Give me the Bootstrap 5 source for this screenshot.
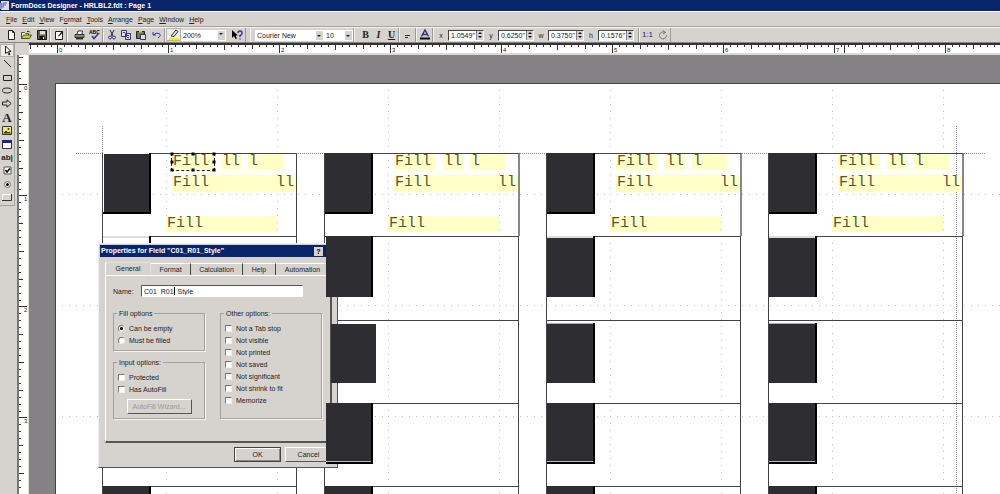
<!DOCTYPE html>
<html lang="en">
<head>
<meta charset="utf-8">
<meta name="viewport" content="width=device-width, initial-scale=1">
<title>FormDocs Designer - HRLBL2.fdt : Page 1</title>
<link href="https://cdn.jsdelivr.net/npm/bootstrap@5.3.0/dist/css/bootstrap.min.css" rel="stylesheet">
<style>
:root { --face:#d6d3ce; --navy:#08246b; --gray:#848284; --ink:#2e2e32; }
body { font:7px/9px "Liberation Sans", Arial, sans-serif; color:#222; background:var(--face); height:100vh; overflow:hidden; }
button, input, select { font:inherit; color:inherit; border-radius:0; }
svg { display:block; }
.titlebar { height:11px; background:var(--navy); color:#fff; font-weight:700; line-height:11px; gap:2px; }
.titlebar h1 { font:inherit; margin:0; }
.menubar { height:16px; padding:0 6px; gap:5px; border-bottom:1px solid #a5a29c; border-top:1px solid #fff; }
.menubar a { color:#222; text-decoration:none; }
.tools { height:16px; border-top:1px solid #f4f2ee; border-bottom:1px solid var(--gray); }
.tools .set { border-right:1px solid #9c9a94; border-left:1px solid #f4f2ee; height:14px; }
.tb { width:15px; height:13px; padding:0; border:0; background:none; display:flex; align-items:center; justify-content:center; }
.tb.on { background:#efedea; outline:1px solid #b5b2ac; outline-offset:-1px; }
.tb.slim { width:13px; }
.pick { appearance:none; border:0; height:11px; padding:0 10px 0 2px; line-height:11px;
  background:#fff linear-gradient(var(--face),var(--face)) right 1px center/7px 9px no-repeat; }
.pickwrap::after { content:""; position:absolute; right:3px; top:5px; border:2px solid transparent; border-top-color:#222; border-bottom:0; }
.num { height:11px; border:1px solid #444; border-right-color:#fff; border-bottom-color:#fff; background:#fff; width:36px; }
.num input { border:0; padding:0 0 0 2px; width:27px; min-width:0; height:9px; line-height:9px; background:none; }
.num div { width:7px; background:var(--face); border-left:1px solid var(--gray); }
.num button { border:0; padding:0; height:4px; width:6px; display:flex; align-items:center; justify-content:center; background:none; }
.num .up::after, .num .dn::after { content:""; border:2px solid transparent; }
.num .up::after { border-bottom-color:#111; border-top:0; }
.num .dn::after { border-top-color:#111; border-bottom:0; }
.axis { width:14px; text-align:center; margin:0; }
.work { display:grid; grid-template-columns:17px 12px 1fr; grid-template-rows:12px 1fr; }
.toolbox { grid-row:1/3; }
.toolbox .stack { height:163px; padding:1px 0; border-right:1px solid #a5a29c; border-bottom:1px solid #a5a29c; width:15px; }
.toolbox .tb { width:14px; }
.hrule { background:#fff; border-top:2px solid #333; border-bottom:2px solid #dddad6; }
.vrule { background:#fff; border-left:2px solid #777; border-right:1px solid #dddad6; }
.marks { font-size:6px; line-height:7px; }
.hrule .marks span { flex:0 0 111px; padding:2px 0 0 2px; }
.vrule .marks span { flex:0 0 111px; padding:0 0 0 5px; }
.hrule .marks { padding-left:28px; }
.vrule .marks { padding-top:30px; }
.canvas { background:var(--gray); padding:28px 0 0 26px; }
.paper { background:#fff; border-top:1px solid #444; border-left:1px solid #444; height:100%; padding:69px 0 0 46px; }
.labels { display:grid; grid-template-columns:repeat(4,195px); grid-template-rows:83px 84px 83px 83px 83px; column-gap:27px; position:relative; }
.tag { border:1px solid #444; border-bottom:0; }
.tag.first.wide { margin-right:-1px; border-right:2px solid #888; }
.photo { width:48px; height:61px; background:var(--ink); border-right:2px solid #000; margin-top:-1px; flex:none; z-index:3; }
.r0 .photo { border-bottom:2px solid #000; }
.first:not(.wide) .photo { box-shadow:inset 1px 1px #fff; }
.r1 .photo { box-shadow:inset 0 2px #ddd; }
.r2 .photo { margin-top:2px; height:60px; box-shadow:inset 0 1px #aaa; }
.r3 .photo { border-bottom:2px solid #000; box-shadow:inset 0 -1px #bbb; }
.c0 .photo { z-index:1; }
.c0.r1 .photo { background:#fff; }
.c1.r1 .photo { box-shadow:none; margin-left:1px; width:47px; }
.c1.r3 .photo { margin-left:1px; width:47px; }
.photo.moved { margin-left:6px; margin-top:3px; width:45px; height:59px; border-right:0; box-shadow:none; }
.fields { font:15px/16px "Liberation Mono", "Courier New", monospace; color:#54543a; padding-left:15px; width:145px; }
.fld { background:#ffffc6; white-space:pre; height:16px; padding-left:1px; }
.line1 { padding-left:6px; gap:7px; height:21px; }
.line2 { margin-left:6px; height:17px; padding-right:2px; display:flex; justify-content:space-between; }
.line3 { margin-top:24px; width:111px; }
.picked { outline:1px dashed #222; outline-offset:0; }
.knob { position:absolute; width:3px; height:3px; background:#000; transform:translate(-50%,-50%); }
.dlg { left:98px; top:243px; width:240px; background:var(--face); z-index:2; padding:1px; border:1px solid #eee; border-right:1px solid #555; border-bottom:1px solid #555; margin:0; }
.dlg header { background:var(--navy); color:#fff; font-weight:700; height:12px; line-height:12px; padding:0 13px 0 1px; }
.dlg header h2 { font:inherit; margin:0; }
.dlg header button { width:9px; height:9px; border:0; padding:0; background:var(--face); color:#000; line-height:9px; font-weight:700; }
.dlg .nav-tabs { margin:5px 5px 0; border:0; height:13px; flex-wrap:nowrap; }
.dlg .nav-link { border:0; border-top:1px solid #fff; border-right:1px solid #444; border-radius:0; padding:0; color:#222; height:12px; line-height:11px; margin:1px 0 0; background:none; }
.dlg .nav-link.active { height:13px; margin:0; border-left:1px solid #fff; line-height:12px; color:#222; background:var(--face); }
.pane { margin:0 4px 0 5px; height:168px; border:1px solid #fff; border-right:2px solid #555; border-bottom:2px solid #555; padding:9px 8px 0 7px; }
.pane label { line-height:9px; }
.namerow { margin-bottom:12px; }
.namebox { width:162px; height:12px; border:1px solid #fff; border-top:1px solid #555; border-left:1px solid #555; background:#fff; padding:0 2px; }
.caret { left:33px; top:2px; width:1px; height:8px; background:#000; }
.box { border:1px solid #a5a29c; box-shadow:1px 1px #f4f2ee; padding:0 4px 4px; margin:0; position:relative; }
.box.tall { padding-bottom:12px; width:102px; }
.box legend { font:inherit; float:none; width:auto; margin:0 0 0 -1px; padding:0 2px; line-height:9px; position:static; }
.opt { height:12px; gap:4px; display:flex; align-items:center; }
.opt input { appearance:none; margin:0; width:7px; height:7px; background:#fff; border:1px solid #777; border-right-color:#eee; border-bottom-color:#eee; flex:none; }
.opt input[type=radio] { border-radius:50%; }
.opt input[type=radio]:checked { background:radial-gradient(circle,#000 1px,#fff 2px); }
.push { background:var(--face); border:1px solid #fff; border-right-color:#555; border-bottom-color:#555; padding:0; height:15px; line-height:12px; width:47px; }
.push.main { border-color:#444; box-shadow:inset 1px 1px #fff, inset -1px -1px #888; }
.push:disabled { color:#9a9892; width:65px; }
</style>
</head>
<body class="d-flex flex-column">
<header class="titlebar d-flex align-items-center">
  <svg width="9" height="9" viewBox="0 0 9 9" class="flex-shrink-0"><rect x="1" width="8" height="9" fill="#dde"/><path d="M3 7V2h4M3 4h3" stroke="#46b" fill="none"/><path d="M0 2h2v6H0z" fill="#88c"/></svg>
  <h1>FormDocs Designer - HRLBL2.fdt : Page 1</h1>
</header>
<nav class="menubar d-flex align-items-center flex-shrink-0">
  <a href="#"><u>F</u>ile</a><a href="#"><u>E</u>dit</a><a href="#"><u>V</u>iew</a><a href="#">F<u>o</u>rmat</a><a href="#"><u>T</u>ools</a><a href="#"><u>A</u>rrange</a><a href="#"><u>P</u>age</a><a href="#"><u>W</u>indow</a><a href="#"><u>H</u>elp</a>
</nav>
<div class="tools d-flex align-items-center flex-shrink-0">
  <div class="set d-flex align-items-center ps-1 border-start-0">
    <button class="tb" aria-label="New"><svg width="9" height="10" viewBox="0 0 9 10"><path d="M1.5.5h4l2 2v7h-6zM5.5.5v2h2" fill="#fff" stroke="#222"/></svg></button>
    <button class="tb" aria-label="Open"><svg width="11" height="10" viewBox="0 0 11 10"><path d="M.5 8.500V2.500h3l1 1h3v2" fill="#ffe" stroke="#552"/><path d="M.5 8.500l2-3.500h8l-2 3.500z" fill="#cc3" stroke="#552"/><path d="M6 1.500q2-1 3 1" stroke="#222" fill="none"/></svg></button>
    <button class="tb" aria-label="Save"><svg width="10" height="10" viewBox="0 0 10 10"><path d="M.5.5h9v9h-9z" fill="#663" stroke="#111"/><path d="M3 1h5v3.500H3z" fill="#dde"/><path d="M2.500 6h5v3.500h-5z" fill="#111"/><path d="M6 7h1v2H6z" fill="#eee"/></svg></button>
  </div>
  <div class="set d-flex"><button class="tb" aria-label="Edit form"><svg width="10" height="10" viewBox="0 0 10 10"><path d="M1.500 1.500h7v8h-7z" fill="#fff" stroke="#222"/><path d="M4 6l4-5 1.500 1L5 6.500z" fill="#222"/></svg></button></div>
  <div class="set d-flex ps-1"><button class="tb" aria-label="Print"><svg width="11" height="10" viewBox="0 0 11 10"><path d="M3 4l1-3h4.500L8 4" fill="#fff" stroke="#333"/><path d="M1 4.500h9v3H1z" fill="#888" stroke="#333"/><path d="M2 8.500h7" stroke="#333" stroke-width="2"/></svg></button>
    <button class="tb" aria-label="Spelling"><svg width="11" height="10" viewBox="0 0 11 10"><text x="0" y="4" font-size="5" font-weight="700">ABC</text><path d="M3 6l2 2.500L9.500 3.500" stroke="#33a" stroke-width="1.500" fill="none"/></svg></button></div>
  <div class="set d-flex"><button class="tb" aria-label="Cut"><svg width="10" height="10" viewBox="0 0 10 10"><path d="M3 0l3 6M7 0L4 6" stroke="#223" fill="none"/><circle cx="3" cy="7.500" r="1.500" fill="none" stroke="#33a"/><circle cx="7" cy="7.500" r="1.500" fill="none" stroke="#33a"/></svg></button>
    <button class="tb" aria-label="Copy"><svg width="11" height="10" viewBox="0 0 11 10"><path d="M.5.500h5v6h-5zM4.500 3.500h5v6h-5z" fill="#dde" stroke="#337"/><path d="M6 5.500h2M6 7.500h2M2 2.500h2" stroke="#337"/></svg></button>
    <button class="tb" aria-label="Paste"><svg width="11" height="10" viewBox="0 0 11 10"><path d="M.5 1.500h8v7h-8z" fill="#774" stroke="#222"/><path d="M3 .5h3v2H3z" fill="#cc6"/><path d="M4.500 4.500h5v5h-5z" fill="#dde" stroke="#337"/></svg></button>
    <button class="tb" aria-label="Undo"><svg width="10" height="10" viewBox="0 0 10 10"><path d="M1 2v3h3M1.500 5Q4 2 7 3.500T6 8" stroke="#33a" fill="none"/></svg></button></div>
  <div class="set d-flex"><button class="tb on" aria-label="Highlight"><svg width="10" height="11" viewBox="0 0 10 11"><path d="M0 9h10v2H0z" fill="#ee0"/><path d="M2 7l5-6 2 1.500L5 7.500z" fill="#ddd" stroke="#333"/></svg></button>
    <div class="pickwrap position-relative d-flex align-items-center"><select class="pick" style="width:45px" aria-label="Zoom"><option>200%</option></select></div>
    <button class="tb ms-1" aria-label="Context help"><svg width="11" height="10" viewBox="0 0 11 10"><path d="M0 0v8l2-2 1.500 3L5 8.500 3.500 5.500H6z"/><path d="M6 3q0-2 2-2t2 2-2 2.500V7M8 8.500v1" stroke="#33a" stroke-width="1.500" fill="none"/></svg></button></div>
  <div class="set d-flex align-items-center ps-1 ms-1"><div class="pickwrap position-relative"><select class="pick d-block" style="width:69px" aria-label="Font"><option>Courier New</option></select></div>
    <div class="pickwrap position-relative"><select class="pick d-block" style="width:29px" aria-label="Size"><option>10</option></select></div></div>
  <div class="set d-flex ps-1" style="font-family:'Liberation Serif',serif;font-size:10px"><button class="tb slim fw-bold">B</button><button class="tb slim fw-bold fst-italic">I</button><button class="tb slim fw-bold text-decoration-underline">U</button></div>
  <div class="set d-flex"><button class="tb" aria-label="Line"><svg width="8" height="8" viewBox="0 0 8 8"><path d="M1 4.500h5M1 6.500h3" stroke="#333"/></svg></button></div>
  <div class="set d-flex"><button class="tb" aria-label="Text colour"><svg width="10" height="11" viewBox="0 0 10 11"><path d="M1.500 7.500L5 1l3.500 6.500M3 5.500h4" stroke="#337" stroke-width="1.500" fill="none"/><path d="M0 8.500h10v2H0z"/></svg></button></div>
  <div class="set d-flex align-items-center">
    <label class="axis" for="px">x</label><div class="num d-flex"><input id="px" value='1.0549"'><div><button class="up" aria-label="More"></button><button class="dn" aria-label="Less"></button></div></div>
    <label class="axis" for="py">y</label><div class="num d-flex"><input id="py" value='0.6250"'><div><button class="up" aria-label="More"></button><button class="dn" aria-label="Less"></button></div></div>
    <label class="axis" for="pw">w</label><div class="num d-flex"><input id="pw" value='0.3750"'><div><button class="up" aria-label="More"></button><button class="dn" aria-label="Less"></button></div></div>
    <label class="axis" for="ph">h</label><div class="num d-flex me-1"><input id="ph" value='0.1576"'><div><button class="up" aria-label="More"></button><button class="dn" aria-label="Less"></button></div></div>
  </div>
  <div class="set d-flex"><button class="tb" style="color:#228;font-size:8px">1:1</button><button class="tb" aria-label="Rotate"><svg width="10" height="10" viewBox="0 0 10 10"><path d="M7 2.500A3.500 3.500 0 1 0 8.500 5M5 .5l2.500 2L5 4" stroke="#777" fill="none"/></svg></button></div>
</div>
<main class="work flex-grow-1 overflow-hidden">
  <aside class="toolbox"><div class="stack d-flex flex-column justify-content-between">
    <button class="tb on" aria-label="Select"><svg width="9" height="11" viewBox="0 0 9 11"><path d="M2.500 1v7.500l2-1.500 1.500 3 1-.5-1.500-3H8z" fill="#fff" stroke="#222"/></svg></button>
    <button class="tb" aria-label="Line"><svg width="9" height="9" viewBox="0 0 9 9"><path d="M1 1l7 7" stroke="#222"/></svg></button>
    <button class="tb" aria-label="Rectangle"><svg width="9" height="9" viewBox="0 0 9 9"><path d="M.5 2.500h8v5h-8z" fill="none" stroke="#222"/></svg></button>
    <button class="tb" aria-label="Ellipse"><svg width="10" height="9" viewBox="0 0 10 9"><ellipse cx="5" cy="4.500" rx="4.500" ry="2.500" fill="none" stroke="#222"/></svg></button>
    <button class="tb" aria-label="Arrow"><svg width="10" height="9" viewBox="0 0 10 9"><path d="M.5 3h4.500V.8L9.200 4.500 5 8.200V6H.5z" fill="none" stroke="#222"/></svg></button>
    <button class="tb" style="font:bold 13px/13px 'Liberation Serif',serif">A</button>
    <button class="tb" aria-label="Picture"><svg width="10" height="9" viewBox="0 0 10 9"><path d="M.5.500h9v8h-9z" fill="#ee6" stroke="#333"/><path d="M1 7.500l3-3 2 2 1.500-1L9 7.500z" fill="#333"/><circle cx="6.500" cy="3" r="1" fill="#333"/></svg></button>
    <button class="tb" aria-label="Table"><svg width="10" height="9" viewBox="0 0 10 9"><path d="M.5.500h9v8h-9z" fill="#fff" stroke="#333"/><path d="M0 0h10v3H0z" fill="#228"/></svg></button>
    <button class="tb fw-bold" style="font-size:8px">ab|</button>
    <button class="tb" aria-label="Check box"><svg width="9" height="9" viewBox="0 0 9 9"><path d="M1 1h7v7H1z" fill="#fff" stroke="#555"/><path d="M2.500 4l1.500 2L7 2.500" stroke="#000" stroke-width="1.500" fill="none"/></svg></button>
    <button class="tb" aria-label="Radio"><svg width="9" height="9" viewBox="0 0 9 9"><circle cx="4.500" cy="4.500" r="3" fill="#fff" stroke="#666"/><circle cx="4.500" cy="4.500" r="1.500"/></svg></button>
    <button class="tb" aria-label="Button"><svg width="10" height="7" viewBox="0 0 10 7"><path d="M.5 6V.5H9" stroke="#fff" fill="none"/><path d="M0 6.500h9.500V0" stroke="#333" fill="none"/></svg></button>
  </div></aside>
  <div></div>
  <div class="hrule position-relative overflow-hidden">
    <svg class="position-absolute w-100 h-100 top-0 start-0"><defs><pattern id="ht" x="28" width="111" height="12" patternUnits="userSpaceOnUse"><path d="M.5 0v8M56.500 0v5M28.500 0v4M84.500 0v4M7.500 0v2M14.500 0v2M21.500 0v2M35.500 0v2M42.500 0v2M49.500 0v2M63.500 0v2M70.500 0v2M77.500 0v2M91.500 0v2M98.500 0v2M105.500 0v2" stroke="#333"/></pattern></defs><rect width="100%" height="100%" fill="url(#ht)"/><path d="M815.500 0v8" stroke="#333"/></svg>
    <div class="marks d-flex"><span>0</span><span>1</span><span>2</span><span>3</span><span>4</span><span>5</span><span>6</span><span>7</span><span>8</span></div>
  </div>
  <div class="vrule position-relative overflow-hidden">
    <svg class="position-absolute w-100 h-100 top-0 start-0"><defs><pattern id="vt" y="29" width="12" height="111" patternUnits="userSpaceOnUse"><path d="M0 .5h8M0 56.500h5M0 28.500h4M0 84.500h4M0 7.500h2M0 14.500h2M0 21.500h2M0 35.500h2M0 42.500h2M0 49.500h2M0 63.500h2M0 70.500h2M0 77.500h2M0 91.500h2M0 98.500h2M0 105.500h2" stroke="#333"/></pattern></defs><rect width="100%" height="100%" fill="url(#vt)"/></svg>
    <div class="marks d-flex flex-column"><span>0</span><span>1</span><span>2</span><span>3</span></div>
  </div>
  <div class="canvas overflow-hidden">
    <div class="paper position-relative">
      <svg class="position-absolute w-100 h-100 top-0 start-0"><defs><pattern id="dots" x="110" y="110" width="111" height="111" patternUnits="userSpaceOnUse"><path d="M.5 0v111M0 .5h111" stroke="#bbb" stroke-dasharray="1 6"/></pattern></defs><rect width="100%" height="100%" fill="url(#dots)"/>
        <path d="M46.500 42v28M900.500 42v600M20 69.500h910" stroke="#888" stroke-dasharray="1 1"/></svg>
      <div class="labels" id="labels"></div>
    </div>
  </div>
</main>
<form class="dlg position-absolute" onsubmit="return false">
  <header class="d-flex justify-content-between align-items-center"><h2>Properties for Field "C01_R01_Style"</h2><button type="button">?</button></header>
  <div class="nav nav-tabs" role="tablist">
    <button type="button" class="nav-link active" style="width:46px">General</button><button type="button" class="nav-link" style="width:40px">Format</button><button type="button" class="nav-link" style="width:52px">Calculation</button><button type="button" class="nav-link" style="width:33px">Help</button><button type="button" class="nav-link" style="width:54px">Automation</button>
  </div>
  <div class="pane">
    <div class="namerow d-flex align-items-center"><label for="fname" style="width:28px">Name:</label><div class="position-relative d-flex"><input id="fname" class="namebox" value="C01_R01_Style"><span class="caret position-absolute"></span></div></div>
    <div class="d-flex justify-content-between">
      <div class="d-flex flex-column justify-content-between" style="width:92px">
        <fieldset class="box"><legend>Fill options</legend>
          <div class="pt-1"><div class="opt"><input type="radio" name="fill" id="f1" checked><label for="f1">Can be empty</label></div>
          <div class="opt"><input type="radio" name="fill" id="f2"><label for="f2">Must be filled</label></div></div></fieldset>
        <fieldset class="box"><legend>Input options:</legend>
          <div class="pt-1"><div class="opt"><input type="checkbox" id="i1"><label for="i1">Protected</label></div>
          <div class="opt"><input type="checkbox" id="i2"><label for="i2">Has AutoFill</label></div></div>
          <button type="button" class="push d-block mx-auto mt-1" disabled>AutoFill Wizard...</button></fieldset>
      </div>
      <fieldset class="box tall"><legend>Other options:</legend>
        <div class="pt-1">
        <div class="opt"><input type="checkbox" id="o1"><label for="o1">Not a Tab stop</label></div>
        <div class="opt"><input type="checkbox" id="o2"><label for="o2">Not visible</label></div>
        <div class="opt"><input type="checkbox" id="o3"><label for="o3">Not printed</label></div>
        <div class="opt"><input type="checkbox" id="o4"><label for="o4">Not saved</label></div>
        <div class="opt"><input type="checkbox" id="o5"><label for="o5">Not significant</label></div>
        <div class="opt"><input type="checkbox" id="o6"><label for="o6">Not shrink to fit</label></div>
        <div class="opt"><input type="checkbox" id="o7"><label for="o7">Memorize</label></div></div></fieldset>
    </div>
  </div>
  <div class="d-flex justify-content-end gap-1 pt-1 pb-1 pe-1"><button type="button" class="push main">OK</button><button type="button" class="push">Cancel</button></div>
</form>
<script src="https://cdn.jsdelivr.net/npm/bootstrap@5.3.0/dist/js/bootstrap.bundle.min.js"></script>
<script>
// Label sheet: four columns, five rows; only the top row carries fields.
const knobs = [[0,0],[50,0],[100,0],[0,50],[100,50],[0,100],[50,100],[100,100]]
  .map(([x, y]) => `<i class="knob" style="left:${x}%;top:${y}%"></i>`).join('');
let html = '';
for (let r = 0; r < 5; r++) for (let c = 0; c < 4; c++) {
  const picked = r === 0 && c === 0;
  const fields = r ? '' : `<div class="fields">
    <div class="line1 d-flex"><div class="fld position-relative ${picked ? 'picked' : ''}" style="width:42px">Fill${picked ? knobs : ''}</div><div class="fld" style="width:20px">ll</div><div class="fld" style="width:35px">l</div></div>
    <div class="fld line2"><span>Fill</span><span>ll</span></div>
    <div class="fld line3">Fill</div></div>`;
  html += `<div class="tag d-flex r${r} c${c} ${r ? '' : 'first'} ${c ? 'wide' : ''}"><div class="photo position-relative ${r === 2 && c === 1 ? 'moved' : ''}"></div>${fields}</div>`;
}
document.getElementById('labels').innerHTML = html;
</script>
</body>
</html>
